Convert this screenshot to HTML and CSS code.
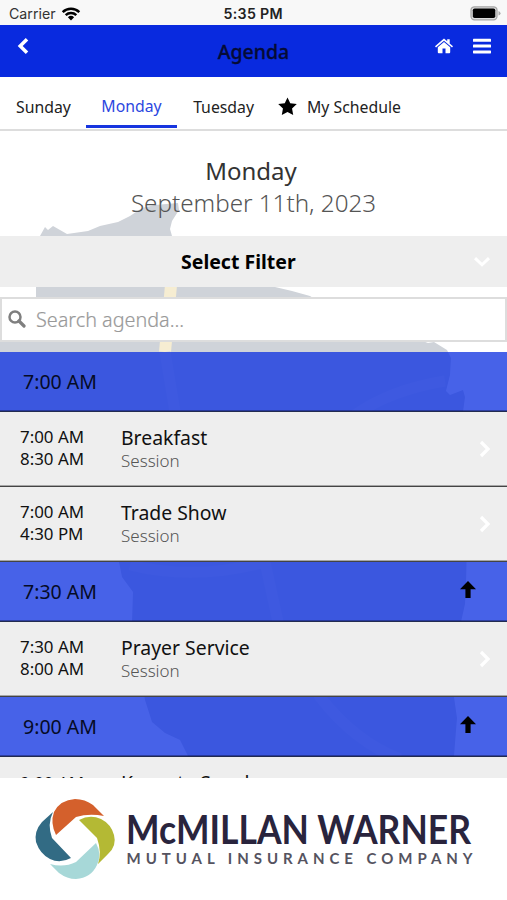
FILE: index.html
```html
<!DOCTYPE html>
<html lang="en">
<head>
<meta charset="utf-8">
<title>Agenda</title>
<link rel="stylesheet" href="styles.css">
</head>
<body>
<div class="status">
  <span class="carrier">Carrier</span>
  <svg class="wifi" width="20" height="14" viewBox="0 0 20 14"><path d="M1.7 5.1a12 12 0 0 1 16.6 0M4.7 8.1a7.7 7.7 0 0 1 10.6 0" fill="none" stroke="#000" stroke-width="2.5"/><path d="M6.9 10.3a4.5 4.5 0 0 1 6.2 0L10 13.5z"/></svg>
  <span class="clock">5:35 PM</span>
  <svg class="battery" width="31" height="15" viewBox="0 0 31 15"><rect x="1" y=".8" width="26" height="13" rx="3.5" fill="#ddd" stroke="#a5a5a5" stroke-width="1.3"/><rect x="2.8" y="2.5" width="22.5" height="9.6" rx="1.8"/><path d="M28.5 5v4.600q2-.7 2-2.300t-2-2.300z" fill="#aaa"/></svg>
</div>
<header class="bar">
  <svg class="back" width="12" height="18" viewBox="0 0 12 18"><path d="M10 2.200 3.200 9l6.800 6.800" fill="none" stroke="#fff" stroke-width="3.500"/></svg>
  <h1>Agenda</h1>
  <div class="actions">
    <svg width="18" height="16" viewBox="0 0 18 16" fill="#fff"><path d="M0 8.200 9 .5l3.200 2.800V1.300h2.500v4.200L18 8.200l-1 1.200L9 2.700 1 9.400z"/><path d="M9 4l6.200 5.200v5.100q0 .9-.9.9h-3.800v-4.600h-3v4.600H3.700q-.9 0-.9-.9V9.200z"/></svg>
    <svg width="18" height="16" viewBox="0 0 18 16" fill="#fff"><rect width="18" height="3" y=".8" rx=".6"/><rect width="18" height="3" y="6.600" rx=".6"/><rect width="18" height="3" y="12.400" rx=".6"/></svg>
  </div>
</header>
<nav class="tabs">
  <a class="tab">Sunday</a>
  <a class="tab active">Monday</a>
  <a class="tab">Tuesday</a>
  <a class="tab mine"><svg width="19" height="19" viewBox="0 0 18 18"><path d="m9 .4 2.600 5.500 6.200.8-4.500 4.200 1.100 6.200L9 14.100l-5.400 3 1.100-6.200L.2 6.700l6.200-.8z"/></svg>My Schedule</a>
</nav>
<main class="content">
  <svg class="map" viewBox="0 131 507 647">
    <path fill="#cfd3d9" d="M36 297V260L40 236 45 227 48 230 53 226 60 230 67 234 88 231 100 226 118 222 130 216 142 208 155 205 178 203 179 210 172 221 170 229 172 236V287H275L292 291 310 296 340 315 420 340 428 343 434 342 447 350 451 358 450 375 446 391 450 395 463 390 465 397 463 412 468 500 466 585 465 604 461 622 454 697 457 718 454 756 452 778H195L188 756 180 740 165 733 152 722 145 700 132 622 133 592 122 577 119 562 100 500H0V342H36z"/>
    <path fill="none" stroke="#f6edd2" stroke-width="12" d="m171 285-6 67"/>
    <path fill="none" stroke="#dadbde" stroke-width="11" d="m165 352 10 60M355 415q35-25 90-34M265 562l13 60 42 75q35 45 80 62M130 565q65 16 135-3"/>
  </svg>
  <section class="day"><h2>Monday</h2><p>September 11th, 2023</p></section>
  <div class="filter">Select Filter<svg width="18" height="12" viewBox="0 0 18 12"><path d="m2 2.200 7 6.600 7-6.600" fill="none" stroke="#fff" stroke-width="3"/></svg></div>
  <div class="search"><svg width="18" height="18" viewBox="0 0 18 18" fill="none" stroke="#7f7f7f"><circle cx="7" cy="7" r="5.500" stroke-width="2.500"/><path d="m11 11 5 5" stroke-width="3.200" stroke-linecap="round"/></svg><span>Search agenda...</span></div>
  <div class="slot">7:00 AM</div>
  <article class="item"><div class="times">7:00 AM<br>8:30 AM</div><div class="info"><h3>Breakfast</h3><p>Session</p></div><svg class="go" width="12" height="18" viewBox="0 0 12 18"><path d="m2 2 7 7-7 7"/></svg></article>
  <article class="item"><div class="times">7:00 AM<br>4:30 PM</div><div class="info"><h3>Trade Show</h3><p>Session</p></div><svg class="go" width="12" height="18" viewBox="0 0 12 18"><path d="m2 2 7 7-7 7"/></svg></article>
  <div class="slot">7:30 AM<svg width="16" height="17" viewBox="0 0 16 17"><path d="m8 0 8 8.300h-5.400V17H5.400V8.300H0z"/></svg></div>
  <article class="item"><div class="times">7:30 AM<br>8:00 AM</div><div class="info"><h3>Prayer Service</h3><p>Session</p></div><svg class="go" width="12" height="18" viewBox="0 0 12 18"><path d="m2 2 7 7-7 7"/></svg></article>
  <div class="slot">9:00 AM<svg width="16" height="17" viewBox="0 0 16 17"><path d="m8 0 8 8.300h-5.400V17H5.400V8.300H0z"/></svg></div>
  <article class="item"><div class="times">9:00 AM<br>9:30 AM</div><div class="info"><h3>Keynote Speaker</h3><p>Session</p></div></article>
</main>
<footer class="sponsor">
  <svg width="507" height="122" viewBox="0 778 507 122">
    <path fill="#d4602c" d="M56 835Q50 823 54 812 60 800 75 799q10 0 18 6l11 11q-15-3-28 1z"/>
    <path fill="#b4b934" d="M79 820q11-6 22-1 10 5 13 16 3 11-6 19l-10 10q4-12-1-26z"/>
    <path fill="#a7d8d8" d="M96 843q6 11 1 22-6 13-21 14-9 0-17-6l-9-9q14 4 26-2z"/>
    <path fill="#326b84" d="M71 858q-11 6-21 1-10-5-14-17-2-11 6-20l11-10q-6 12-1 26z"/>
    <text class="brand" x="126" y="843.500" textLength="345" lengthAdjust="spacingAndGlyphs">McMILLAN WARNER</text>
    <text class="tagline" x="126.500" y="864" textLength="346">MUTUAL INSURANCE COMPANY</text>
  </svg>
</footer>
</body>
</html>
```
FILE: styles.css
```css
* { box-sizing: border-box; }
body { margin: 0; width: 507px; height: 900px; overflow: hidden; display: flex; flex-direction: column; background: #fff; color: #111; font-family: "Noto Sans", "Open Sans", sans-serif; }
h1, h2, h3, p { margin: 0; font-weight: 400; }
svg { display: block; flex: none; }

.status { height: 25px; flex: none; display: grid; grid-template-columns: auto auto 1fr auto; align-items: center; padding: 2px 6px 0 9px; background: #f8f8f8; font: 14.200px/20px Inter, sans-serif; }
.carrier { color: #333; }
.wifi { margin-left: 5px; }
.clock { font-weight: 600; justify-self: start; margin-left: 143px; color: #222; white-space: nowrap; letter-spacing: .3px; }

.bar { height: 52px; flex: none; display: grid; grid-template-columns: 100px 1fr 100px; background: #092adf; }
.back { margin: 12px 0 0 17px; }
.bar h1 { text-align: center; font-size: 19.500px; line-height: 53px; font-weight: 500; color: #050b35; -webkit-text-stroke: .3px #050b35; }
.actions { display: flex; justify-content: flex-end; gap: 20px; padding: 13px 16px 0 0; }

.tabs { height: 54px; flex: none; display: flex; align-items: flex-start; border-bottom: 2px solid #ddd; font-size: 15.800px; line-height: 24px; color: #222; }
.tab { height: 51px; padding: 18px 15px 0 16px; white-space: nowrap; }
.active { color: #2c47df; border-bottom: 3px solid #1735df; padding: 17px 15.500px 0; }
.mine { display: flex; gap: 10px; padding-left: 9px; }
.mine svg { margin-top: 2px; }

.content { position: relative; flex: 1; min-height: 0; overflow: hidden; }
.map { position: absolute; inset: 0; width: 507px; height: 647px; z-index: -1; }
.day { height: 105px; padding-top: 24px; text-align: center; font-size: 24.200px; line-height: 32px; color: #333; }
.day h2 { font-size: 24px; padding-right: 5px; }
.day p { font-weight: 300; color: #555; }
.filter { height: 51px; display: flex; align-items: center; justify-content: space-between; padding: 0 16px 0 181px; background: #eee; font-size: 19.500px; font-weight: 700; color: #000; }
.search { height: 45px; margin: 10px 0; padding: 0 6px; display: flex; align-items: center; gap: 10px; background: #fff; border: 2px solid #ddd; color: #999; font-size: 19.800px; font-weight: 300; -webkit-text-stroke: .2px #999; }
.search svg { margin-top: -1px; }
.slot { height: 60px; display: flex; justify-content: space-between; padding: 0 31px 0 23px; background: rgba(10, 45, 224, .75); border-bottom: 1px solid #222b50; box-shadow: inset 0 -1px rgba(0, 0, 30, .35); font-size: 19.500px; line-height: 60px; color: #050b25; }
.slot svg { margin-top: 19px; }
.item { height: 75px; display: flex; align-items: center; padding: 0 16px 0 20px; background: #eee; border-bottom: 1px solid #444; box-shadow: inset 0 -1px rgba(0, 0, 0, .3); }
.item:last-child { padding-top: 3px; }
.item:last-child .info { margin-top: -3px; }
.times { width: 101px; font-size: 16.900px; line-height: 22px; padding-bottom: 3px; }
.info h3 { font-size: 19.400px; line-height: 26px; }
.info p { font-size: 17px; line-height: 20px; font-weight: 300; color: #555; padding-bottom: 2px; }
.go { margin: -1px 0 0 auto; fill: none; stroke: #fff; stroke-width: 3.200; }

.sponsor { height: 122px; flex: none; background: #fff; }
.brand { font: 700 40px Lato, sans-serif; fill: #29243d; }
.tagline { font: 700 15px Lato, sans-serif; fill: #55535f; }
```
